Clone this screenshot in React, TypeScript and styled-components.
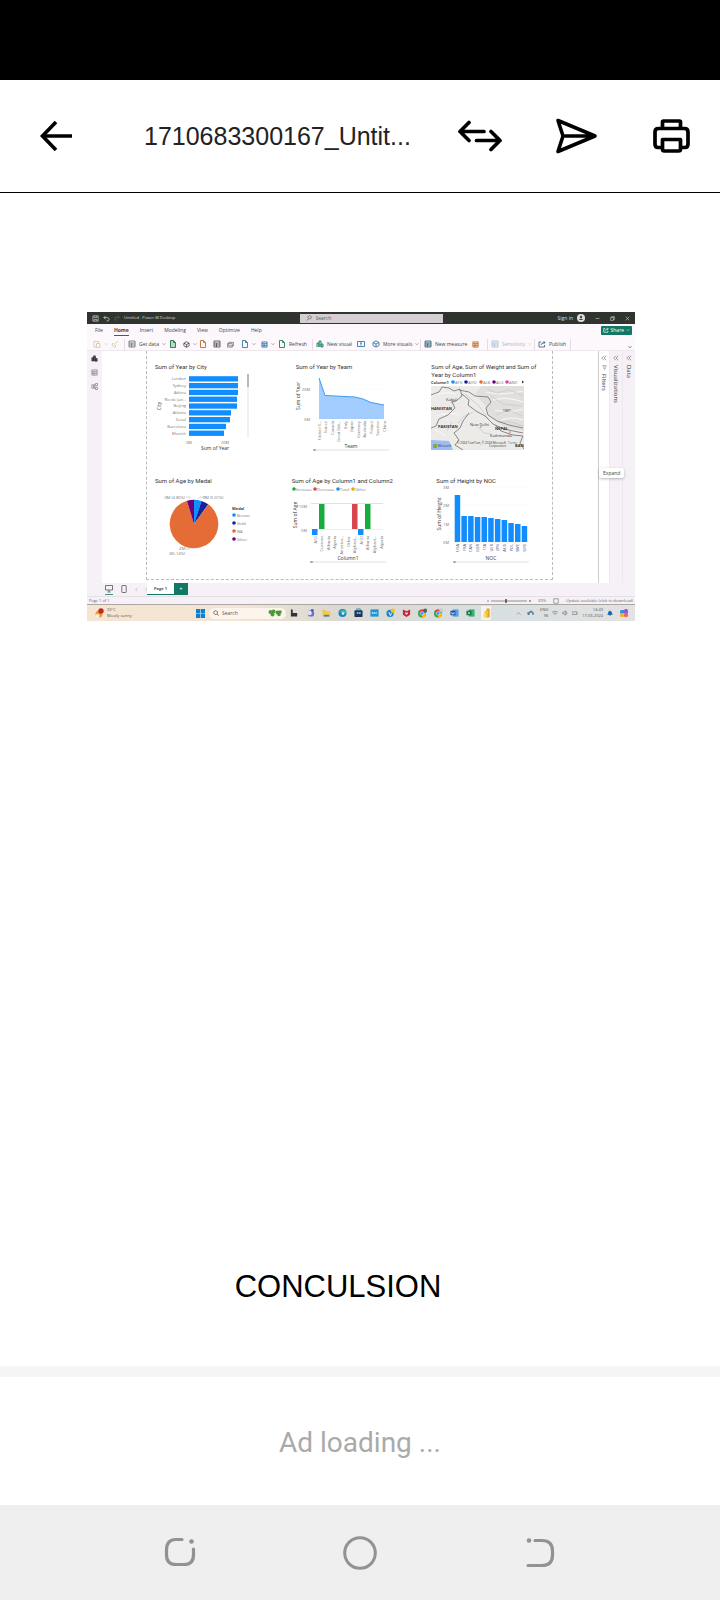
import React from "react";
import styled, { createGlobalStyle } from "styled-components";

const GlobalStyle = createGlobalStyle`
  *, *::before, *::after { box-sizing: border-box; }
  body { margin: 0; background: #fff; font-family: Roboto, sans-serif; }
  button { border: 0; padding: 0; background: none; color: inherit; font: inherit; display: flex; align-items: center; }
  svg { display: block; flex: none; }
`;

/* ---------- phone shell ---------- */

const Screen = styled.div`
  min-height: 100vh;
  display: flex;
  flex-direction: column;
`;

const StatusStrip = styled.div`
  height: 80px;
  background: #000;
`;

const Header = styled.header`
  display: flex;
  align-items: center;
  height: 113px;
  padding: 0 28px 0 36px;
  border-bottom: 1px solid #000;
`;

const Title = styled.h1`
  flex: 1;
  min-width: 0;
  margin: 0 0 0 68px;
  font: 400 25px/40px "Liberation Sans", sans-serif;
  color: #222;
  white-space: nowrap;
`;

const Actions = styled.div`
  display: flex;
  align-items: center;
  gap: 53px;
`;

const Document = styled.main`
  flex: 1;
  display: flex;
  flex-direction: column;
  padding: 119px 85px 0 87px;
`;

const Heading = styled.h2`
  margin: 646px 46px 59px 0;
  text-align: center;
  font: 400 31px/40px "Liberation Sans", sans-serif;
  color: #000;
`;

const AdSlot = styled.aside`
  height: 139px;
  padding-top: 12px;
  border-top: 11px solid #f5f5f5;
  text-align: center;
  font-size: 28px;
  line-height: 108px;
  color: #aaa;
`;

const NavBar = styled.nav`
  display: flex;
  justify-content: center;
  align-items: center;
  gap: 144px;
  height: 96px;
  background: #efefef;
  color: #929292;
`;

/* ---------- report application ---------- */

const Desktop = styled.section`
  display: flex;
  flex-direction: column;
  font: 5px/6px "Open Sans", sans-serif;
  color: #444;
  background: #f5f1f6;
  white-space: nowrap;
`;

const TitleBar = styled.div`
  display: flex;
  align-items: center;
  height: 12px;
  padding: 0 5px;
  background: #2f342f;
  color: #ddd;
`;

const TitleLeft = styled.div`
  flex: 1;
  display: flex;
  align-items: center;
  gap: 4px;
  font-size: 4px;
`;

const SearchBox = styled.label`
  display: flex;
  align-items: center;
  gap: 4px;
  width: 143px;
  height: 9px;
  margin-left: 20px;
  padding: 0 6px;
  background: #d5cfd5;
  color: #47685d;
`;

const TextInput = styled.input`
  min-width: 0;
  flex: 1;
  border: 0;
  padding: 0;
  height: 7px;
  background: transparent;
  font: inherit;
  color: inherit;
  &::placeholder { color: inherit; opacity: 1; }
`;

const TitleRight = styled.div`
  flex: 1;
  display: flex;
  justify-content: flex-end;
  align-items: center;
  gap: 10px;
`;

const SignIn = styled.button`
  gap: 4px;
`;

const Menu = styled.div`
  display: flex;
  align-items: center;
  gap: 11px;
  height: 12px;
  padding: 0 3px 0 8px;
  background: #fcf7fb;
`;

const MenuItem = styled.button<{ $active?: boolean }>`
  height: 12px;
  font-weight: ${(p) => (p.$active ? 700 : 400)};
  box-shadow: ${(p) => (p.$active ? "inset 0 -1px #117865" : "none")};
`;

const Share = styled.button`
  gap: 2px;
  margin-left: auto;
  height: 9px;
  padding: 0 2px;
  border-radius: 1px;
  background: #117865;
  color: #fff;
`;

const Ribbon = styled.div`
  display: flex;
  align-items: center;
  height: 15px;
  padding: 2px 0 0 6px;
  background: #fdf8fc;
  border-bottom: 1px solid #eee8ee;
`;

const Tool = styled.button<{ $w: number; $off?: boolean }>`
  width: ${(p) => p.$w}px;
  gap: 3px;
  opacity: ${(p) => (p.$off ? 0.4 : 1)};
`;

const Divider = styled.span`
  width: 1px;
  height: 11px;
  margin-right: 3px;
  background: #e4dee4;
`;

const RibbonEnd = styled.button`
  margin: 6px 3px 0 auto;
`;

const Workspace = styled.div`
  display: flex;
`;

const ViewRail = styled.div`
  display: flex;
  flex-direction: column;
  align-items: center;
  gap: 7px;
  width: 15px;
  padding-top: 4px;
`;

const Canvas = styled.div`
  flex: 1;
  min-width: 0;
  padding: 0 45px 3px 44px;
  background: #fff;
`;

const Report = styled.div`
  display: grid;
  grid-template-columns: 136fr 140fr 130fr;
  grid-auto-rows: 114px;
  border: dashed #bbb;
  border-width: 0 1px 1px;
`;

const Card = styled.figure<{ $indent: number }>`
  margin: 0;
  min-width: 0;
  padding-top: 12px;
  figcaption {
    padding-left: ${(p) => p.$indent}px;
    font-family: Roboto, sans-serif;
    font-size: 6px;
    line-height: 8px;
    color: #333;
    white-space: pre-line;
  }
`;

const Plot = styled.svg`
  overflow: visible;
  font: 4px "Open Sans", sans-serif;
  fill: #777;
`;

const Pane = styled.div<{ $white?: boolean }>`
  position: relative;
  display: flex;
  flex-direction: column;
  align-items: center;
  gap: 4px;
  width: ${(p) => (p.$white ? 11 : 13)}px;
  padding-top: 4px;
  background: ${(p) => (p.$white ? "#fff" : "#f5f1f6")};
  border-left: 1px solid ${(p) => (p.$white ? "#ccc" : "#eee9ef")};
`;

const PaneTitle = styled.span`
  writing-mode: vertical-rl;
  font-size: 6px;
  line-height: 8px;
  color: #333;
`;

const ExpandTip = styled.span`
  position: absolute;
  top: 117px;
  left: 0;
  z-index: 1;
  padding: 2px 4px;
  border-radius: 2px;
  background: #fff;
  box-shadow: 0 1px 3px #0004;
`;

const PageTabs = styled.div`
  display: flex;
  align-items: flex-start;
  height: 13px;
  padding-left: 18px;
  color: #555;
`;

const TabIcons = styled.div`
  display: flex;
  align-items: center;
  gap: 7px;
  width: 42px;
  height: 12px;
`;

const PageTab = styled.button`
  justify-content: center;
  width: 27px;
  height: 12px;
  background: #fff;
  font-weight: 700;
  font-size: 4px;
  border-bottom: 1px solid #117865;
`;

const AddPage = styled.button`
  justify-content: center;
  width: 14px;
  height: 12px;
  background: #117865;
  color: #fff;
  font-weight: 700;
`;

const StatusLine = styled.div`
  display: flex;
  align-items: center;
  gap: 7px;
  height: 8px;
  padding: 0 2px;
  border-top: 1px solid #e6e0e6;
  font-size: 4px;
  color: #666;
`;

const Grow = styled.span`
  flex: 1;
`;

const Taskbar = styled.div`
  display: flex;
  align-items: center;
  height: 17px;
  padding: 0 6px 0 8px;
  border-top: 1px solid #aaa6a3;
  background: linear-gradient(90deg, #f5e5d2, #f3e4d4 28%, #dcd9d2 45%, #d8dfe1 75%, #e4e2e2);
  color: #555;
`;

const Weather = styled.div`
  display: flex;
  align-items: center;
  gap: 3px;
  width: 101px;
  font-size: 4px;
  line-height: 6px;
`;

const TaskSearch = styled.label`
  display: flex;
  align-items: center;
  gap: 3px;
  width: 77px;
  height: 11px;
  margin: 0 3px 0 4px;
  padding: 0 4px;
  border-radius: 6px;
  background: #fdf5ec;
`;

const Apps = styled.div`
  display: flex;
  gap: 6px;
`;

const AppButton = styled.button<{ $active?: boolean }>`
  width: 10px;
  height: 14px;
  justify-content: center;
  background: ${(p) => (p.$active ? "#f7f2ea" : "transparent")};
`;

const Tray = styled.div`
  display: flex;
  align-items: center;
  gap: 4px;
  margin-left: auto;
  font-size: 4px;
  line-height: 6px;
  text-align: right;
`;

/* ---------- icons ---------- */

type Draw = { w?: number; d: string; color?: string; fill?: string; sw?: number };

const Mini = ({ w = 8, d, color = "#777", fill = "none", sw = 0.9 }: Draw) => (
  <svg width={w} height={w} viewBox="0 0 8 8" fill={fill} stroke={color} strokeWidth={sw} aria-hidden="true">
    <path d={d} />
  </svg>
);

const Chevron = ({ color = "#777" }: { color?: string }) => <Mini w={4} d="M1 2.5 4 5.5 7 2.5" color={color} sw={1.2} />;

const shapes = {
  save: "M1 1H7V7H1ZM2.500 1V3H5.500V1M2.500 7V5H5.500V7",
  undo: "M3 1 1 3 3 5M1 3H5Q7 3 7 5T4 7",
  redo: "M5 1 7 3 5 5M7 3H3Q1 3 1 5T4 7",
  lens: "M4.800 1A2.200 2.200 0 1 1 4.790 1M3.300 4.900 1 7.300",
  paste: "M1 1.500H5.500V3M1 1.500V7H3M3.500 3.500H7V7.500H3.500Z",
  brush: "M7 1 4 4M2 3 5 6 3 7.500 1 5Z",
  table: "M1 1H7V7H1ZM1 3H7M1 5H7M3.500 3V7",
  page: "M1.500 .5H4.500L6.500 2.500V7.500H1.500ZM4.500 .5V2.500H6.500",
  cube: "M4 .8 7 2.500V5.500L4 7.200 1 5.500V2.500ZM4 4 7 2.500M4 4 1 2.500M4 4V7",
  bars: "M1 7V3H3V7M3 7V1H5V7M5 7V4H7V7Z",
  text: "M.5 1.500H7.500V6.500H.5ZM3 3H5M4 3V5.500",
  share: "M3 2H1V7H6.500V5M3 5Q3 2.500 7 2.500M5.500 1 7 2.500 5.500 4",
};

const ArrowLeft = () => (
  <svg width="40" height="40" viewBox="0 0 40 40" fill="none" stroke="#000" strokeWidth="3.600">
    <path d="M36 20H7M20 6 6.500 20 20 34" />
  </svg>
);

const SwapIcon = () => (
  <svg width="44" height="36" viewBox="0 0 44 36" fill="none" stroke="#000" strokeWidth="3.700" strokeLinecap="round" strokeLinejoin="round">
    <path d="M26 13.500H2M11 4.500 2 13.500 11 22.500M18.500 22.500H42M33 13.500 42 22.500 33 31.500" />
  </svg>
);

const SendIcon = () => (
  <svg width="44" height="36" viewBox="0 0 44 36" fill="none" stroke="#000" strokeWidth="3.600" strokeLinejoin="round">
    <path d="M3 2.500 40 18 3 33.500 8 18ZM8 18H38" />
  </svg>
);

const PrintIcon = () => (
  <svg width="40" height="36" viewBox="0 0 40 36" fill="none" stroke="#000" strokeWidth="3.700" strokeLinejoin="round">
    <path d="M10.500 10V4Q10.500 3 11.500 3H27.500Q28.500 3 28.500 4V10M9 29.500H6Q3 29.500 3 26V14Q3 10.500 6.500 10.500H32.500Q36 10.500 36 14V26Q36 29.500 33 29.500H30M10.500 21.500H28.500V31Q28.500 33 26.500 33H12.500Q10.500 33 10.500 31Z" />
  </svg>
);

/* ---------- charts ---------- */

const BLUE = "#118dff";

type Label = { x: number; y: number; children: string; anchor?: "start" | "middle" | "end"; size?: number; fill?: string; bold?: boolean };
const T = ({ x, y, children, anchor = "start", size, fill, bold }: Label) => (
  <text x={x} y={y} textAnchor={anchor} dominantBaseline="central" fontSize={size} fill={fill} fontWeight={bold ? 700 : undefined}>{children}</text>
);

const SideTitle = ({ x, y, children }: { x: number; y: number; children: string }) => (
  <text transform={`translate(${x} ${y}) rotate(-90)`} textAnchor="middle" dominantBaseline="central" fontSize={5} fill="#333">{children}</text>
);

const Categories = ({ names, x, y, step }: { names: string[]; x: number; y: number; step: number }) => (
  <>
    {names.map((n, i) => (
      <text key={i} transform={`translate(${x + i * step} ${y}) rotate(-90)`} textAnchor="end" dominantBaseline="central">{n}</text>
    ))}
  </>
);

const Scroll = ({ x, y }: { x: number; y: number }) => (
  <>
    <rect x={x} y={y} width="76" height="2" rx="1" fill="#f1edf1" />
    <rect x={x} y={y} width="3" height="2" rx="1" fill="#aaa" />
  </>
);

const cities: [string, number][] = [
  ["London", 49], ["Sydney", 49], ["Athina", 49], ["Rio de Jan...", 48], ["Beijing", 48], ["Atlanta", 42], ["Seoul", 41], ["Barcelona", 37], ["Munich", 35],
];

const CityChart = () => (
  <Plot width="136" height="93">
    {cities.map(([name, w], i) => (
      <g key={name}>
        <T x={39} y={7.7 + i * 6.8} anchor="end">{name}</T>
        <rect x="42" y={5.2 + i * 6.8} width={w} height="5.300" fill={BLUE} />
      </g>
    ))}
    <rect x="100" y="3" width="2" height="64" fill="#f3eff3" />
    <rect x="100" y="3" width="2" height="13" fill="#bbb8bb" />
    <T x={42} y={71} anchor="middle">0M</T>
    <T x={78} y={71} anchor="middle">20M</T>
    <T x={68} y={77} anchor="middle" size={5} fill="#333">Sum of Year</T>
    <SideTitle x={12} y={35}>City</SideTitle>
  </Plot>
);

const TeamChart = () => (
  <Plot width="140" height="93">
    <path d="M28 18H106M28 48H106" stroke="#eee" strokeWidth=".500" strokeDasharray="1 1" />
    <path d="M36 7 42 24.500 72 26 80 28 88 31.500 101 34V48H36Z" fill="#a4cdff" />
    <path d="M36 7 42 24.500 72 26 80 28 88 31.500 101 34" fill="none" stroke="#3c9cf5" />
    <T x={27} y={18} anchor="end">20M</T>
    <T x={27} y={48} anchor="end">0M</T>
    <SideTitle x={15} y={25}>Sum of Year</SideTitle>
    <Categories x={36} y={50} step={6.5} names={["United S...", "France", "Canada", "Great Brit...", "Italy", "Japan", "Germany", "Australia", "Poland", "Sweden", "China"]} />
    <T x={68} y={75} anchor="middle" size={5} fill="#333">Team</T>
    <Scroll x={30} y={78} />
  </Plot>
);

const codes: [string, number, string][] = [
  ["AFG", 31, BLUE], ["AHO", 44, "#12239e"], ["ALB", 59, "#e66c37"], ["ALG", 72, "#6b007b"], ["AND", 85, "#e044a7"],
];

const MapChart = () => (
  <Plot width="130" height="85">
    <T x={9} y={3} bold fill="#444">Column1</T>
    {codes.map(([c, x, fill]) => (
      <g key={c}>
        <circle cx={x} cy="3" r="1.800" fill={fill} />
        <T x={x + 2} y={3}>{c}</T>
      </g>
    ))}
    <path d="M100 1.500 102 3 100 4.500Z" fill="#333" />
    <svg x="9" y="7" width="93" height="64" viewBox="0 0 93 64">
      <rect width="93" height="64" fill="#edebe8" />
      <path d="M50 0H93V45L75 42 60 32 54 19 44 8Z" fill="#e1dfdd" />
      <g fill="none" stroke="#f7f5f3" strokeWidth="1.200">
        <path d="M55 6Q70 10 92 5M62 14Q76 10 92 16M64 24Q77 28 92 23M70 34Q82 30 92 34M0 10Q12 5 25 8M5 30Q16 26 28 29M4 44 15 50" />
      </g>
      <g fill="none" stroke="#c9c6c3" strokeWidth=".700">
        <path d="M56 3 66 7 78 4 92 10M60 10 72 18 90 20M65 29 78 24 91 30M68 36 80 36 92 40M34 8 48 20 58 34" />
      </g>
      <path d="M42 26 32 31 27 37M47 41 53 47 60 48M21 36 16 45" fill="none" stroke="#a9cbe8" strokeWidth=".700" />
      <path d="M0 9 8 6 11 1 18 2 23 5 29 3 31 10 25 15 21 16 24 22 17 29 8 33 5 40 0 42M28 4 38 6 44 10 57 11 60 16 55 22 57 29 66 35 78 39 92 42M31 8 38 14 37 19 45 25 54 30 62 38 73 43 92 47M38 27 32 35 29 42 23 47 28 54 24 59 32 64M64 39 70 45 82 49 92 50 89 57 93 63" fill="none" stroke="#888" />
      <path d="M0 54 18 55 22 64H0Z" fill="#9bbdf5" />
      <rect x="2" y="58" width="4" height="4" fill="#8aa842" />
      <circle cx="21" cy="16" r=".700" fill="#d64550" /><circle cx="50" cy="41" r=".700" fill="#d64550" /><circle cx="79" cy="46" r=".700" fill="#d64550" />
      <g fill="#333">
        <T x={15} y={13}>Kabul</T>
        <T x={0} y={22} bold>HANISTAN</T>
        <T x={7} y={40} bold>PAKISTAN</T>
        <T x={39} y={38}>New Delhi</T>
        <T x={72} y={25} size={3}>TIBET</T>
        <T x={64} y={42} bold>NEPAL</T>
        <T x={59} y={49}>Kathmandu</T>
        <T x={84} y={59} bold>BANG</T>
        <T x={7} y={60} size={3}>Microsoft</T>
        <T x={75} y={57} size={3} anchor="end">© 2024 TomTom, © 2024 Microsoft</T>
        <T x={75} y={60} size={3} anchor="end">Corporation</T>
        <T x={77} y={57} size={3} fill="#2868c8">Terms</T>
      </g>
    </svg>
  </Plot>
);

const slice = (from: number, to: number) => {
  const p = (a: number) => `${47 + 24.3 * Math.sin((a * Math.PI) / 180)} ${39 - 24.3 * Math.cos((a * Math.PI) / 180)}`;
  return `M47 39L${p(from)}A24.3 24.3 0 ${to - from > 180 ? 1 : 0} 1 ${p(to)}Z`;
};

const medals: [string, string, number, number][] = [
  ["Bronze", BLUE, 0, 18], ["Gold", "#12239e", 18, 36], ["NA", "#e66c37", 36, 343], ["Silver", "#6b007b", 343, 360],
];

const MedalChart = () => (
  <Plot width="136" height="93">
    {medals.map(([name, fill, a, b], i) => (
      <g key={name}>
        <path d={slice(a, b)} fill={fill} />
        <circle cx="87" cy={30 + i * 8} r="1.800" fill={fill} />
        <T x={90} y={30 + i * 8}>{name}</T>
      </g>
    ))}
    <path d="M39 12H43V14M59 12H53L51 14M38 64H43V62" fill="none" stroke="#bbb" strokeWidth=".600" />
    <T x={85} y={23} bold fill="#444">Medal</T>
    <T x={38} y={12} anchor="end">0M (4.86%)</T>
    <T x={56} y={12}>0M (5.01%)</T>
    <T x={38} y={63} anchor="end">4M</T>
    <T x={38} y={68} anchor="end">(85.14%)</T>
  </Plot>
);

const changes: [string, number, string][] = [["Increase", 11, "#1aab40"], ["Decrease", 32, "#d64550"], ["Total", 55, BLUE], ["Other", 70, "#d9b300"]];
const steps: [number, number, number, string][] = [[29, 44, 6, BLUE], [36, 19, 25, "#1aab40"], [69, 19, 25, "#d64550"], [75, 44, 6, BLUE], [82, 19, 25, "#1aab40"]];

const ColumnChart = () => (
  <Plot width="140" height="93">
    {changes.map(([n, x, fill]) => (
      <g key={n}>
        <circle cx={x} cy="4" r="1.800" fill={fill} />
        <T x={x + 2} y={4}>{n}</T>
      </g>
    ))}
    <path d="M28 18.500H100" stroke="#ccc" strokeWidth=".600" />
    <path d="M28 44.500H100" stroke="#e5e5e5" strokeWidth=".600" />
    {steps.map(([x, y, h, fill]) => <rect key={x} x={x} y={y} width="5.500" height={h} fill={fill} />)}
    <T x={24} y={21} anchor="end">10M</T>
    <T x={24} y={45} anchor="end">0M</T>
    <SideTitle x={12} y={30}>Sum of Age</SideTitle>
    <Categories x={32} y={51} step={6.6} names={["AFG", "Curacao", "Albania", "Algeria", "America...", "Other", "Afghani...", "AHO", "Albania", "Afghani...", "Algeria"]} />
    <T x={65} y={73} anchor="middle" size={5} fill="#333">Column1</T>
    <Scroll x={27} y={76} />
  </Plot>
);

const tops = [10, 31, 31, 32, 32, 33, 34, 35, 38, 39, 41];

const NocChart = () => (
  <Plot width="130" height="93">
    <path d="M31 2H106M31 20H106M31 39H106M31 57H106" stroke="#e8e8e8" strokeWidth=".500" strokeDasharray="1 1" />
    {tops.map((t, i) => <rect key={i} x={32.7 + i * 6.7} y={t} width="5.500" height={57 - t} fill={BLUE} />)}
    <T x={27} y={2} anchor="end">3M</T>
    <T x={27} y={20} anchor="end">2M</T>
    <T x={27} y={39} anchor="end">1M</T>
    <T x={27} y={57} anchor="end">0M</T>
    <SideTitle x={17} y={29}>Sum of Height</SideTitle>
    <g fill="#447"><Categories x={35.5} y={59} step={6.7} names={["USA", "FRA", "CAN", "GBR", "ITA", "GER", "JPN", "AUS", "POL", "SWE", "URS"]} /></g>
    <T x={69} y={73} anchor="middle" size={5} fill="#333">NOC</T>
    <Scroll x={31} y={76} />
  </Plot>
);

const cards: [string, number, React.FC][] = [
  ["Sum of Year by City", 8, CityChart],
  ["Sum of Year by Team", 13, TeamChart],
  ["Sum of Age, Sum of Weight and Sum of\nYear by Column1", 9, MapChart],
  ["Sum of Age by Medal", 8, MedalChart],
  ["Sum of Age by Column1 and Column2", 9, ColumnChart],
  ["Sum of Height by NOC", 14, NocChart],
];

/* ---------- taskbar glyphs ---------- */

const taskIcons: [string, React.ReactNode][] = [
  ["Task view", <><rect x="1" y="1" width="6" height="6" fill="#ddd" /><path d="M1 1H3V5H8V9H1Z" fill="#333" /></>],
  ["Teams", <><rect x="2" y="2" width="7" height="7" rx="3" fill="#6870c8" /><circle cx="4" cy="5" r="2.500" fill="#dfe0fa" /><circle cx="7" cy="2" r="1.500" fill="#5058b8" /></>],
  ["Explorer", <><path d="M.5 1.500H4L5 3H9.500V9H.5Z" fill="#f7c948" /><path d="M2 7H8V9H2Z" fill="#2b88d8" /></>],
  ["Edge", <><circle cx="5" cy="5" r="4.500" fill="#1787c8" /><path d="M1 5Q3 0 9 3 9 6 6 6Q6 4 4 4T1 5" fill="#43c59e" /><circle cx="5.500" cy="5.500" r="1.400" fill="#fff" /></>],
  ["Store", <><rect x=".5" y="2" width="9" height="7.500" rx="1" fill="#235" /><path d="M3 2V.5H7V2" fill="none" stroke="#28a" /><path d="M3 4H5V6H3ZM5.500 4H7.500V6H5.500Z" fill="#49c1f0" /></>],
  ["HP", <><rect x=".5" y="1" width="9" height="8" fill="#1e96d6" /><path d="M2 5H8" stroke="#d4efff" strokeWidth="1.500" strokeDasharray="1.500 .5" /></>],
  ["Tips", <><circle cx="4.500" cy="5.500" r="4" fill="#1687ce" /><path d="M3 4 5 8 6 5" stroke="#fff" fill="none" /><circle cx="7.500" cy="2.500" r="2.400" fill="#f9bf23" /></>],
  ["McAfee", <path d="M1 1 5 3 9 1V7L5 9.500 1 7ZM3.500 4V6L5 7 6.500 6V4L5 5Z" fill="#c8243a" fillRule="evenodd" />],
  ...(["Chrome", "Chrome profile"].map((n, i) => [n, <React.Fragment key={n}><circle cx="4.500" cy="5.500" r="4.500" fill="#31a853" /><path d="M.6 3.500A4.500 4.500 0 0 1 8.500 3.500L4.500 5.500Z" fill="#e54335" /><path d="M9 5A4.500 4.500 0 0 1 4.500 10L5 5Z" fill="#fbbc05" /><circle cx="4.500" cy="5.500" r="1.900" fill="#4285f4" stroke="#fff" strokeWidth=".600" /><circle cx="8" cy="2.200" r="2.200" fill={i ? "#b9cede" : "#456674"} /></React.Fragment>]) as [string, React.ReactNode][]),
  ["Word", <><rect x="3" y="1" width="6.500" height="8" fill="#54a0e8" /><rect x=".5" y="2.500" width="5.500" height="5" fill="#174ea0" /><path d="M1.500 4 2.500 6.500 3.300 4.500 4.100 6.500 5 4" fill="none" stroke="#fff" strokeWidth=".600" /></>],
  ["Excel", <><rect x="3" y="1" width="6.500" height="8" fill="#31b36e" /><rect x=".5" y="2.500" width="5.500" height="5" fill="#116d3b" /><path d="M2 3.700 4.500 6.500M4.500 3.700 2 6.500" stroke="#fff" strokeWidth=".700" /></>],
  ["Power BI", <><rect x="5" y="0" width="3.500" height="10" rx=".500" fill="#e3a51c" /><rect x="3" y="2.500" width="3.500" height="7.500" rx=".500" fill="#f3c832" /><rect x="1.500" y="5.500" width="3" height="4.500" rx=".500" fill="#f7dc68" /></>],
];

const ReportWindow = () => (
  <Desktop>
    <TitleBar>
      <TitleLeft>
        <Mini w={7} d={shapes.save} color="#bbb" />
        <Mini w={7} d={shapes.undo} color="#ccc" />
        <Mini w={6} d={shapes.redo} color="#666" />
        Untitled - Power BI Desktop
      </TitleLeft>
      <SearchBox>
        <Mini w={6} d={shapes.lens} color="#555" />
        <TextInput placeholder="Search" aria-label="Search" />
      </SearchBox>
      <TitleRight>
        <SignIn>
          Sign in
          <svg width="8" height="8" viewBox="0 0 8 8"><circle cx="4" cy="4" r="4" fill="#ddd" /><circle cx="4" cy="3" r="1.200" fill="#444" /><path d="M1.800 6Q4 3.500 6.200 6Z" fill="#444" /></svg>
        </SignIn>
        <Mini w={5} d="M1 4H7" color="#ddd" />
        <Mini w={5} d="M1 2.500H5.500V7H1ZM2.500 2.500V1H7V5.500H5.500" color="#ddd" />
        <Mini w={5} d="M1 1 7 7M7 1 1 7" color="#ddd" />
      </TitleRight>
    </TitleBar>
    <Menu>
      {["File", "Home", "Insert", "Modeling", "View", "Optimize", "Help"].map((m) => (
        <MenuItem key={m} $active={m === "Home"}>{m}</MenuItem>
      ))}
      <Share><Mini w={6} d={shapes.share} color="#fff" />Share<Mini w={4} d="M1 2.500 4 5.500 7 2.500" color="#fff" /></Share>
    </Menu>
    <Ribbon>
      <Tool $w={18} $off aria-label="Paste"><Mini d={shapes.paste} color="#b07a40" /><Chevron /></Tool>
      <Tool $w={13} $off aria-label="Format painter"><Mini d={shapes.brush} color="#b07a40" /></Tool>
      <Divider />
      <Tool $w={41}><Mini d={shapes.table} />Get data<Chevron /></Tool>
      <Tool $w={14} aria-label="Excel workbook"><Mini d={shapes.page} color="#217346" fill="#b5dcc4" /></Tool>
      <Tool $w={16} aria-label="Data hub"><Mini w={7} d={shapes.cube} color="#444" /><Chevron /></Tool>
      <Tool $w={14} aria-label="SQL Server"><Mini d={shapes.page} color="#b5702a" /></Tool>
      <Tool $w={14} aria-label="Enter data"><Mini d={shapes.table} color="#555" /></Tool>
      <Tool $w={14} aria-label="Dataverse"><Mini w={7} d="M2 1.500H7.500V5.500H2ZM.5 3H6V7H.5Z" /></Tool>
      <Tool $w={20} aria-label="Recent sources"><Mini d={shapes.page} color="#3478a8" /><Chevron /></Tool>
      <Tool $w={17} aria-label="Transform data"><Mini w={7} d={shapes.table} color="#3478a8" fill="#cfe4f2" /><Chevron /></Tool>
      <Tool $w={34}><Mini d={shapes.page} color="#218052" />Refresh</Tool>
      <Divider />
      <Tool $w={41}><Mini d={shapes.bars} color="#278468" fill="#b7dce7" />New visual</Tool>
      <Tool $w={15} aria-label="Text box"><Mini d={shapes.text} color="#3478a8" /></Tool>
      <Tool $w={48}><Mini d={shapes.cube} color="#3478a8" />More visuals<Chevron /></Tool>
      <Divider />
      <Tool $w={48}><Mini d={shapes.table} color="#456b82" fill="#cbdbe5" />New measure</Tool>
      <Tool $w={15} aria-label="Quick measure"><Mini w={7} d={shapes.table} color="#b5702a" fill="#f0d7bd" /></Tool>
      <Divider />
      <Tool $w={43} $off><Mini d={shapes.table} color="#3478a8" />Sensitivity<Chevron /></Tool>
      <Divider />
      <Tool $w={32}><Mini d={shapes.share} color="#456b82" />Publish</Tool>
      <Divider />
      <RibbonEnd aria-label="Collapse ribbon"><Chevron color="#333" /></RibbonEnd>
    </Ribbon>
    <Workspace>
      <ViewRail>
        <Mini w={7} d={shapes.bars} color="#333" fill="#555" />
        <Mini w={7} d={shapes.table} color="#888" />
        <Mini w={7} d="M1 2H3V6H1ZM5 .5H7.500V3H5ZM5 5H7.500V7.500H5ZM3 4H4V2H5M4 4V6H5" color="#888" />
      </ViewRail>
      <Canvas>
        <Report>
          {cards.map(([title, indent, Chart]) => (
            <Card key={title} $indent={indent}>
              <figcaption>{title}</figcaption>
              <Chart />
            </Card>
          ))}
        </Report>
      </Canvas>
      {["Filters", "Visualizations", "Data"].map((name, i) => (
        <Pane key={name} $white={i === 0}>
          <Mini w={6} d="M4 1 1 4 4 7M7 1 4 4 7 7" />
          {i === 0 && <Mini w={5} d="M1 1H7L5 4V7L3 6V4Z" />}
          <PaneTitle>{name}</PaneTitle>
          {i === 0 && <ExpandTip>Expand</ExpandTip>}
        </Pane>
      ))}
    </Workspace>
    <PageTabs>
      <TabIcons>
        <svg width="8" height="11" viewBox="0 0 8 11" fill="none" stroke="#555" strokeWidth=".800"><path d="M.5 1.500H7.500V6H.5ZM4 6V8M2.500 8H5.500" /><path d="M0 10.500H8" stroke="#117865" /></svg>
        <svg width="8" height="8" viewBox="0 0 8 8" fill="none" stroke="#555" strokeWidth=".800"><rect x="1.800" y=".500" width="4.400" height="7" rx=".500" /></svg>
        <Mini w={3} d="M6 0 2 4 6 8" color="#999" sw={1.5} />
        <Mini w={3} d="M2 0 6 4 2 8" color="#999" sw={1.5} />
      </TabIcons>
      <PageTab>Page 1</PageTab>
      <AddPage aria-label="New page">+</AddPage>
    </PageTabs>
    <StatusLine>
      Page 1 of 1
      <Grow />
      <svg width="44" height="6" viewBox="0 0 44 6" stroke="#666" strokeWidth=".700"><path d="M0 3H2M4 3H40M42 3H44M43 2V4" /><path d="M19 1V5" stroke="#222" strokeWidth="1.200" /></svg>
      69%
      <Mini w={6} d="M1 1H7V7H1Z" />
      Update available (click to download)
    </StatusLine>
    <Taskbar>
      <Weather>
        <svg width="9" height="10" viewBox="0 0 9 10"><circle cx="4" cy="6" r="3.500" fill="#f39b2e" /><circle cx="2.500" cy="8" r="2" fill="#eee" /><circle cx="6" cy="3" r="2.700" fill="#c4281c" /></svg>
        <span>33°C<br />Mostly sunny</span>
      </Weather>
      <svg width="9" height="9" viewBox="0 0 9 9" fill="#0f7fd6"><path d="M0 0H4.200V4.200H0ZM4.800 0H9V4.200H4.800ZM0 4.800H4.200V9H0ZM4.800 4.800H9V9H4.800Z" /></svg>
      <TaskSearch>
        <Mini w={6} d="M3.500 1A2.500 2.500 0 1 1 3.490 1M5.300 5.300 7.500 7.500" color="#333" />
        <TextInput placeholder="Search" aria-label="Search Windows" />
        <svg width="14" height="8" viewBox="0 0 14 8" fill="#4e9a35"><circle cx="2.500" cy="3" r="2" /><circle cx="5.500" cy="2.500" r="2" /><circle cx="4.500" cy="5.500" r="2" /><circle cx="9.500" cy="3.500" r="2" /><circle cx="12" cy="3" r="1.800" /><circle cx="11" cy="5.500" r="1.800" /></svg>
      </TaskSearch>
      <Apps>
        {taskIcons.map(([name, art]) => (
          <AppButton key={name} $active={name === "Power BI"} aria-label={name}>
            <svg width="9" height="10" viewBox="0 0 10 10">{art}</svg>
          </AppButton>
        ))}
      </Apps>
      <Tray>
        <Mini w={5} d="M1 5.500 4 2.500 7 5.500" />
        <svg width="11" height="6" viewBox="-2 0 11 6"><path d="M1 5Q-1 2 2 2 4-1 6 2 8 4 6 5Z" fill="#557f91" /><circle cx="4" cy="4" r="1.500" fill="#dde" /></svg>
        <span>ENG<br />IN</span>
        <Mini w={6} d="M0 3Q4 0 8 3M1.500 5Q4 3 6.500 5M4 6V7" />
        <Mini w={6} d="M1 3H2.500L4.500 1V7L2.500 5H1ZM6 2Q7.500 4 6 6" />
        <Mini w={6} d="M0 2.500H6.500V6H0ZM7.500 3.500V5" />
        <span>14:43<br />17-03-2024</span>
        <Mini w={6} d="M1 6Q2 5 2 3.500A2 2 0 0 1 6 3.500Q6 5 7 6ZM3 7H5" color="#145ca8" fill="#145ca8" />
        <svg width="12" height="9" viewBox="-3 0 12 9"><rect x="0" y="1" width="5" height="4" rx="1.500" fill="#2d8fe0" /><rect x="4" y="0" width="4" height="5" rx="1.500" fill="#8c59d8" /><rect x="0" y="4" width="5" height="4" rx="1.500" fill="#efb62d" /><rect x="4" y="4" width="4" height="4" rx="1.500" fill="#e86468" /></svg>
      </Tray>
    </Taskbar>
  </Desktop>
);

export default function App() {
  return (
    <Screen>
      <GlobalStyle />
      <StatusStrip />
      <Header>
        <button aria-label="Back"><ArrowLeft /></button>
        <Title>1710683300167_Untit...</Title>
        <Actions>
          <button aria-label="Convert"><SwapIcon /></button>
          <button aria-label="Send"><SendIcon /></button>
          <button aria-label="Print"><PrintIcon /></button>
        </Actions>
      </Header>
      <Document>
        <ReportWindow />
        <Heading>CONCULSION</Heading>
      </Document>
      <AdSlot>Ad loading ...</AdSlot>
      <NavBar>
        <button aria-label="Recent apps">
          <svg width="36" height="36" viewBox="0 0 36 36" fill="none" stroke="currentColor" strokeWidth="3.200" strokeLinecap="round"><path d="M20 4.500H14Q4.500 4.500 4.500 15V20Q4.500 29.500 14 29.500H22Q31.500 29.500 31.500 20V14" /><circle cx="29.500" cy="6.500" r="2.300" fill="currentColor" stroke="none" /></svg>
        </button>
        <button aria-label="Home">
          <svg width="36" height="36" viewBox="0 0 36 36" fill="none" stroke="currentColor" strokeWidth="3"><circle cx="18" cy="18" r="15.300" /></svg>
        </button>
        <button aria-label="Back to previous">
          <svg width="36" height="36" viewBox="0 0 36 36" fill="none" stroke="currentColor" strokeWidth="3.200" strokeLinecap="round"><path d="M13 5.500H20Q30.500 5.500 30.500 16V20Q30.500 30.500 20 30.500H6" /><circle cx="7" cy="5.500" r="2.300" fill="currentColor" stroke="none" /></svg>
        </button>
      </NavBar>
    </Screen>
  );
}
